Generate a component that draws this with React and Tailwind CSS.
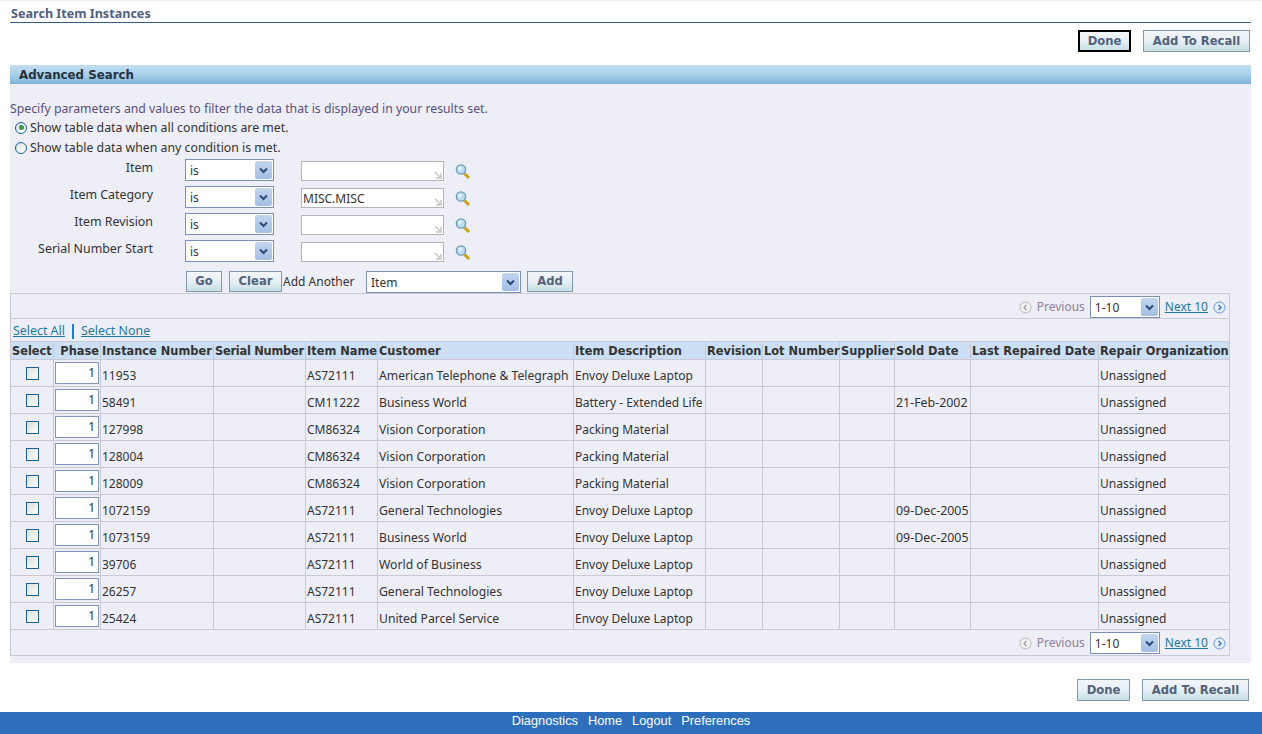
import React from 'react';

const ROWS = [
  ['11953', 'AS72111', 'American Telephone & Telegraph', 'Envoy Deluxe Laptop', ''],
  ['58491', 'CM11222', 'Business World', 'Battery - Extended Life', '21-Feb-2002'],
  ['127998', 'CM86324', 'Vision Corporation', 'Packing Material', ''],
  ['128004', 'CM86324', 'Vision Corporation', 'Packing Material', ''],
  ['128009', 'CM86324', 'Vision Corporation', 'Packing Material', ''],
  ['1072159', 'AS72111', 'General Technologies', 'Envoy Deluxe Laptop', '09-Dec-2005'],
  ['1073159', 'AS72111', 'Business World', 'Envoy Deluxe Laptop', '09-Dec-2005'],
  ['39706', 'AS72111', 'World of Business', 'Envoy Deluxe Laptop', ''],
  ['26257', 'AS72111', 'General Technologies', 'Envoy Deluxe Laptop', ''],
  ['25424', 'AS72111', 'United Parcel Service', 'Envoy Deluxe Laptop', ''],
];

const COLUMNS = [
  ['Select', 43, 'text-left'],
  ['Phase', 47, 'text-right'],
  ['Instance Number', 113, 'text-left'],
  ['Serial Number', 92, 'text-left tracking-[-0.25px]'],
  ['Item Name', 72, 'text-left'],
  ['Customer', 196, 'text-left'],
  ['Item Description', 132, 'text-left'],
  ['Revision', 57, 'text-left'],
  ['Lot Number', 77, 'text-left'],
  ['Supplier', 55, 'text-left'],
  ['Sold Date', 76, 'text-left'],
  ['Last Repaired Date', 128, 'text-left'],
  ['Repair Organization', 131, 'text-left'],
];

const FILTERS = [
  ['Item', ''],
  ['Item Category', 'MISC.MISC'],
  ['Item Revision', ''],
  ['Serial Number Start', ''],
];

function Magnifier() {
  return (
    <svg width="16" height="17" viewBox="0 0 16 17" className="shrink-0">
      <path d="M9.5 10.5 L14 15" stroke="#c4a21a" strokeWidth="3" />
      <circle cx="6" cy="6.5" r="4.6" fill="#bcdcf0" stroke="#6f9cb4" strokeWidth="1.4" />
      <circle cx="5" cy="5.5" r="1.8" fill="#e6f4fb" />
    </svg>
  );
}

function FakeSelect({ value, widthClass }) {
  return (
    <div className={`flex h-[22px] shrink-0 items-center justify-between border border-[#7891b4] bg-white pl-1 pr-[1px] ${widthClass}`}>
      <span className="pt-[2px] text-[12px] leading-none text-[#333]">{value}</span>
      <span className="flex h-[18px] w-[17px] items-center justify-center rounded-[2px] bg-gradient-to-b from-[#c3d5ee] to-[#a4bfe4]">
        <svg width="9" height="7" viewBox="0 0 9 7">
          <path d="M1 1.5 L4.5 5 L8 1.5" fill="none" stroke="#2e4a78" strokeWidth="2" />
        </svg>
      </span>
    </div>
  );
}

function LovInput({ value }) {
  return (
    <div className="relative h-[20px] w-[143px] shrink-0 border border-[#b3b3b9] bg-white pl-[1px] text-[12px] leading-[19px] text-[#333]">
      {value}
      <svg width="8" height="8" viewBox="0 0 8 8" className="absolute bottom-[1px] right-[1px]">
        <path d="M1 1 L6 6 M7 2 V7 H2" fill="none" stroke="#c4c4c4" strokeWidth="1.4" />
      </svg>
    </div>
  );
}

function Button({ children, className = '' }) {
  return (
    <button
      type="button"
      className={`flex items-center justify-center border border-[#8597ab] bg-gradient-to-b from-[#f3f6f9] via-[#e6eff6] to-[#c5dfe2] pt-[1px] font-['DejaVu_Sans',sans-serif] text-[11.6px] font-bold text-[#53617a] ${className}`}
    >
      {children}
    </button>
  );
}

function Radio({ checked, label }) {
  return (
    <div className="flex h-[20px] items-center pl-[5px]">
      <span className="-mt-[1px] flex h-[12px] w-[12px] items-center justify-center rounded-full border border-[#1d5f91] bg-gradient-to-br from-[#dfe3e3] to-white">
        {checked ? <span className="h-[5px] w-[5px] rounded-full bg-[#2f9e44]" /> : null}
      </span>
      <span className="ml-[3px] text-[12.3px] text-[#333]">{label}</span>
    </div>
  );
}

function Pager({ className = '' }) {
  return (
    <div className={`flex items-center justify-end border-[#c9c9d6] bg-[#eeeef7] pr-[3px] text-[12px] ${className}`}>
      <svg width="13" height="13" viewBox="0 0 13 13">
        <circle cx="6.5" cy="6.5" r="5.5" fill="#f2f2f2" stroke="#b5b5b5" />
        <path d="M7.5 4 L5 6.5 L7.5 9" fill="none" stroke="#a0a0a0" strokeWidth="1.3" />
      </svg>
      <span className="mx-[5px] text-[#8e8398]">Previous</span>
      <FakeSelect value="1-10" widthClass="w-[70px]" />
      <span className="mx-[5px] text-[#1d7a9c] underline">Next 10</span>
      <svg width="13" height="13" viewBox="0 0 13 13">
        <circle cx="6.5" cy="6.5" r="5.5" fill="#e6f0fc" stroke="#5c94dc" />
        <path d="M5.5 4 L8 6.5 L5.5 9" fill="none" stroke="#2f6fc4" strokeWidth="1.3" />
      </svg>
    </div>
  );
}

export default function App() {
  return (
    <div className="flex h-[734px] w-[1262px] flex-col overflow-hidden bg-white font-['Noto_Sans',sans-serif]">
      <div className="h-[1px] bg-[#eeeef7]" />

      <div className="mx-[10px] h-[22px] w-[1241px] border-b border-[#36598f] pl-[1px] pt-[5px] text-[12.6px] font-bold leading-[16px] text-[#51607f]">
        Search Item Instances
      </div>

      <div className="mt-[7px] flex h-[22px] justify-end gap-[12px] pr-[12px]">
        <Button className="w-[53px] border-2 border-black">Done</Button>
        <Button className="w-[107px]">Add To Recall</Button>
      </div>

      <div className="mx-[10px] mt-[13px] flex h-[19px] w-[1241px] items-center bg-gradient-to-b from-[#c3deef] via-[#a9d0e8] to-[#7fb2d8] pl-[9px] pt-[2px] font-['DejaVu_Sans',sans-serif] text-[11.8px] font-bold text-[#27303f]">
        Advanced Search
      </div>

      <div className="mx-[10px] h-[580px] w-[1241px] bg-[#eeeef7]">
        <div className="pt-[17px] text-[12.27px] leading-[16px] text-[#5b4f7d]">
          Specify parameters and values to filter the data that is displayed in your results set.
        </div>
        <div className="mt-[1px]">
          <Radio checked label="Show table data when all conditions are met." />
          <Radio label="Show table data when any condition is met." />
        </div>

        <div className="mt-[1px] flex flex-col gap-[5px]">
          {FILTERS.map(([label, value]) => (
            <div key={label} className="flex h-[22px] items-center">
              <span className="-mt-[3px] w-[143px] shrink-0 text-right text-[12.4px] text-[#333]">{label}</span>
              <div className="ml-[32px]">
                <FakeSelect value="is" widthClass="w-[89px]" />
              </div>
              <div className="ml-[27px] mt-[2px]">
                <LovInput value={value} />
              </div>
              <div className="ml-[11px] mt-[2px]">
                <Magnifier />
              </div>
            </div>
          ))}
        </div>

        <div className="mt-[9px] flex h-[22px] items-start text-[12px] text-[#333]">
          <Button className="ml-[176px] h-[21px] w-[36px]">Go</Button>
          <Button className="ml-[7px] h-[21px] w-[53px]">Clear</Button>
          <span className="ml-[1px] mt-[2px] w-[83px]">Add Another</span>
          <FakeSelect value="Item" widthClass="w-[155px]" />
          <Button className="ml-[6px] h-[21px] w-[46px]">Add</Button>
        </div>

        <div className="w-[1220px]">
          <Pager className="h-[26px] border pt-[2px]" />
          <div className="flex h-[22px] items-center border-x border-[#c9c9d6] pl-[2px] pt-[2px] text-[12.4px] text-[#1d7a9c]">
            <span className="underline">Select All</span>
            <span className="mx-[7px] h-[15px] w-[2px] bg-[#1d7fbc]" />
            <span className="underline">Select None</span>
          </div>

          <table className="w-[1220px] table-fixed border-collapse">
            <colgroup>
              {COLUMNS.map(([name, width]) => (
                <col key={name} style={{ width }} />
              ))}
            </colgroup>
            <thead>
              <tr className="h-[18px] bg-[#cddff5]">
                {COLUMNS.map(([name, , align]) => (
                  <th
                    key={name}
                    className={`overflow-visible whitespace-nowrap border border-[#c9c9d6] px-[1px] pb-0 pt-[3px] font-['DejaVu_Sans',sans-serif] text-[11.4px] font-bold leading-none text-[#333] ${align}`}
                  >
                    {name}
                  </th>
                ))}
              </tr>
            </thead>
            <tbody>
              {ROWS.map(([instance, item, customer, description, sold]) => (
                <tr key={instance} className="h-[27px] text-[12px] text-[#333]">
                  <td className="border border-[#c9c9d6] p-0">
                    <div className="ml-[15px] mt-[1px] h-[13px] w-[13px] border border-[#1d5f91] bg-gradient-to-br from-[#d9dfd9] to-white" />
                  </td>
                  <td className="border border-[#c9c9d6] p-0">
                    <div className="ml-[1px] h-[22px] w-[44px] border border-[#7f96b8] bg-white pr-[3px] text-right leading-[19px]">1</div>
                  </td>
                  <td className="border border-[#c9c9d6] px-[1px] pt-[6px]">{instance}</td>
                  <td className="border border-[#c9c9d6]" />
                  <td className="border border-[#c9c9d6] px-[1px] pt-[6px]">{item}</td>
                  <td className="whitespace-nowrap border border-[#c9c9d6] px-[1px] pt-[7px] text-[12.2px]">{customer}</td>
                  <td className="whitespace-nowrap border border-[#c9c9d6] px-[1px] pt-[6px]">{description}</td>
                  <td className="border border-[#c9c9d6]" />
                  <td className="border border-[#c9c9d6]" />
                  <td className="border border-[#c9c9d6]" />
                  <td className="whitespace-nowrap border border-[#c9c9d6] px-[1px] pt-[7px] text-[12.4px]">{sold}</td>
                  <td className="border border-[#c9c9d6]" />
                  <td className="border border-[#c9c9d6] px-[1px] pt-[6px]">Unassigned</td>
                </tr>
              ))}
            </tbody>
          </table>

          <Pager className="h-[26px] border-x border-b pt-[1px]" />
        </div>
      </div>

      <div className="mt-[16px] flex h-[22px] justify-end gap-[12px] pr-[13px]">
        <Button className="w-[53px]">Done</Button>
        <Button className="w-[107px]">Add To Recall</Button>
      </div>

      <div className="mt-[11px] flex h-[22px] items-center justify-center gap-[10px] bg-[#2e6fbd] pb-[4px] font-['Liberation_Sans',sans-serif] text-[12.8px] text-white">
        <span>Diagnostics</span>
        <span>Home</span>
        <span>Logout</span>
        <span>Preferences</span>
      </div>
    </div>
  );
}
